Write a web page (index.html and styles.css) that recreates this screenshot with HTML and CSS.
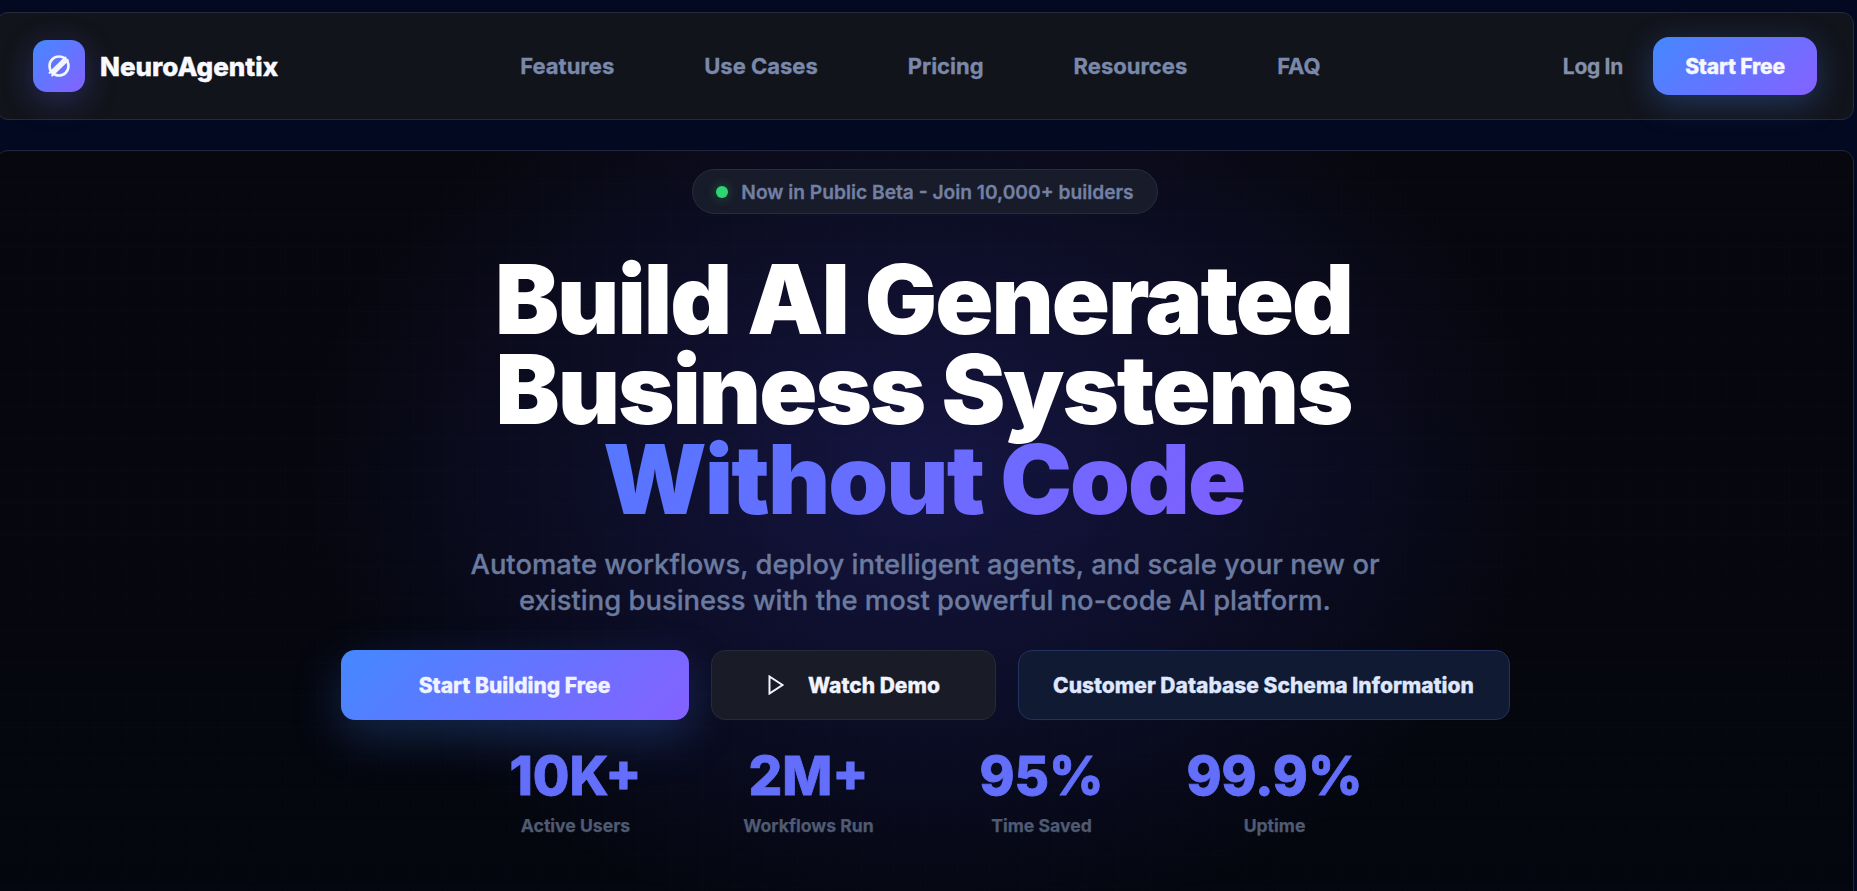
FILE: index.html
```html
<!DOCTYPE html>
<html lang="en">
<head>
    <meta charset="UTF-8">
    <meta name="viewport" content="width=device-width, initial-scale=1.0">
    <title>NeuroAgentix</title>
    <link rel="stylesheet" href="styles.css">
</head>
<body>
    <div class="page">
        <nav class="navbar">
            <div class="brand">
                <div class="brand-icon">
                    <svg width="28" height="28" viewBox="0 0 28 28" fill="none" stroke="#f4f6ff" stroke-width="2.6">
                        <circle cx="14" cy="14" r="9.5"/>
                        <path d="M4 21.5 21 5M6.5 24 23.5 7.5" stroke-width="2"/>
                        <path d="M8 20.5 20 8.5" stroke-width="3.4"/>
                    </svg>
                </div>
                <span class="brand-name">NeuroAgentix</span>
            </div>
            <div class="nav-links">
                <a>Features</a>
                <a>Use Cases</a>
                <a>Pricing</a>
                <a>Resources</a>
                <a>FAQ</a>
            </div>
            <div class="nav-actions">
                <a class="login">Log In</a>
                <a class="btn-start">Start Free</a>
            </div>
        </nav>

        <section class="hero">
            <div class="beta-badge">
                <span class="beta-dot"></span>
                Now in Public Beta - Join 10,000+ builders
            </div>
            <h1>Build AI Generated<br>Business Systems<br><span class="gradient-text">Without Code</span></h1>
            <p class="subtitle">Automate workflows, deploy intelligent agents, and scale your new or<br>existing business with the most powerful no-code AI platform.</p>
            <div class="hero-buttons">
                <a class="btn btn-primary">Start Building Free</a>
                <a class="btn btn-dark">
                    <svg width="20" height="20" viewBox="0 0 20 20" fill="none" stroke="#f1f4ff" stroke-width="2">
                        <path d="M3.5 1.5 16.5 10 3.5 18.5Z"/>
                    </svg>
                    Watch Demo
                </a>
                <a class="btn btn-schema">Customer Database Schema Information</a>
            </div>
            <div class="stats">
                <div class="stat"><div class="stat-value">10K+</div><div class="stat-label">Active Users</div></div>
                <div class="stat"><div class="stat-value">2M+</div><div class="stat-label">Workflows Run</div></div>
                <div class="stat"><div class="stat-value">95%</div><div class="stat-label">Time Saved</div></div>
                <div class="stat"><div class="stat-value">99.9%</div><div class="stat-label">Uptime</div></div>
            </div>
        </section>
    </div>
</body>
</html>
```

FILE: styles.css
```css
html, body {
    margin: 0;
    height: 100%;
    overflow: hidden;
}
body {
    background: #030920;
    font-family: Inter, "Liberation Sans", sans-serif;
    color: #fff;
}
a {
    text-decoration: none;
}
.page {
    width: 1858px;
    margin-left: -4px;
    padding-top: 12px;
    display: flex;
    flex-direction: column;
    gap: 30px;
}
.navbar {
    height: 108px;
    box-sizing: border-box;
    padding: 0 36px;
    display: flex;
    justify-content: space-between;
    align-items: center;
    background: #12141b;
    border: 1px solid #262b3a;
    border-radius: 12px;
}
.brand {
    display: flex;
    align-items: center;
    gap: 15px;
}
.brand-icon {
    width: 52px;
    height: 52px;
    border-radius: 14px;
    background: linear-gradient(135deg, #4488ff, #8561ff);
    box-shadow: 0 8px 32px rgba(99, 102, 241, 0.3);
    display: flex;
    align-items: center;
    justify-content: center;
}
.brand-name {
    font-size: 26px;
    font-weight: 800;
    color: #f8faff;
    -webkit-text-stroke: 0.4px #f8faff;
}
.nav-links {
    display: flex;
    gap: 90px;
}
.nav-links a {
    font-size: 22px;
    font-weight: 700;
    color: #7a89ab;
    -webkit-text-stroke: 0.3px #7a89ab;
}
.login {
    font-size: 21px;
    font-weight: 700;
    letter-spacing: -0.3px;
    color: #8490ab;
    -webkit-text-stroke: 0.3px #8490ab;
}
.nav-actions {
    display: flex;
    align-items: center;
    gap: 30px;
}
.btn-start {
    width: 164px;
    height: 58px;
    display: flex;
    align-items: center;
    justify-content: center;
    border-radius: 16px;
    background: linear-gradient(135deg, #4488ff, #8561ff);
    box-shadow: 0 8px 32px rgba(68, 136, 255, 0.3);
    font-size: 21px;
    font-weight: 800;
    letter-spacing: -0.2px;
    color: #f6f7ff;
    -webkit-text-stroke: 0.3px #f6f7ff;
}
.hero {
    height: 760px;
    box-sizing: border-box;
    padding-top: 18px;
    display: flex;
    flex-direction: column;
    align-items: center;
    background:
        radial-gradient(ellipse 620px 460px at 50% 42%, rgba(45, 45, 150, 0.38), transparent),
        linear-gradient(rgba(255, 255, 255, 0.008) 1px, transparent 1px) 0 0 / 100% 32px,
        linear-gradient(90deg, rgba(255, 255, 255, 0.008) 1px, transparent 1px) 0 0 / 32px 100%,
        linear-gradient(#07070e, #04060f);
    border: 1px solid #20253a;
    border-radius: 12px;
}
.beta-badge {
    height: 45px;
    box-sizing: border-box;
    padding: 0 23px;
    display: flex;
    align-items: center;
    gap: 13px;
    background: #181b29;
    border: 1px solid #282c3d;
    border-radius: 23px;
    font-size: 19.2px;
    font-weight: 600;
    color: #7280a3;
    -webkit-text-stroke: 0.3px #7280a3;
}
.beta-dot {
    width: 12px;
    height: 12px;
    border-radius: 50%;
    background: #2ed573;
    box-shadow: 0 0 12px rgba(46, 213, 115, 0.4);
}
h1 {
    margin: 40px 0 0;
    padding-right: 3px;
    font-size: 96px;
    font-weight: 900;
    line-height: 90px;
    text-align: center;
    letter-spacing: -2px;
}
.gradient-text {
    background: linear-gradient(135deg, #5578ff, #7f5fff);
    -webkit-background-clip: text;
    background-clip: text;
    color: transparent;
}
.subtitle {
    margin: 22px 0 0;
    font-size: 27.4px;
    font-weight: 500;
    line-height: 36px;
    text-align: center;
    color: #6b7a9f;
    -webkit-text-stroke: 0.3px #6b7a9f;
}
.hero-buttons {
    margin-top: 32px;
    display: flex;
    gap: 22px;
}
.btn {
    height: 70px;
    box-sizing: border-box;
    display: flex;
    align-items: center;
    justify-content: center;
    gap: 22px;
    border-radius: 14px;
    font-size: 21px;
    font-weight: 800;
    color: #f1f4ff;
    -webkit-text-stroke: 0.3px #f1f4ff;
}
.btn-primary {
    width: 348px;
    background: linear-gradient(135deg, #4488ff, #8561ff);
    box-shadow: 0 16px 48px rgba(68, 136, 255, 0.25);
}
.btn-dark {
    width: 285px;
    background: #191b27;
    border: 1px solid #272a38;
}
.btn-schema {
    width: 492px;
    background: #111a33;
    border: 1px solid #22335f;
    color: #dfe7ff;
    -webkit-text-stroke: 0.3px #dfe7ff;
}
.stats {
    margin-top: 23px;
    display: grid;
    grid-template-columns: repeat(4, 233px);
}
.stat {
    text-align: center;
}
.stat-value {
    font-size: 53px;
    font-weight: 800;
    line-height: 66px;
    color: #636ffb;
    -webkit-text-stroke: 0.8px #636ffb;
}
.stat-label {
    margin-top: 6px;
    font-size: 17.6px;
    font-weight: 700;
    color: #4f5a73;
    -webkit-text-stroke: 0.25px #4f5a73;
}
```
